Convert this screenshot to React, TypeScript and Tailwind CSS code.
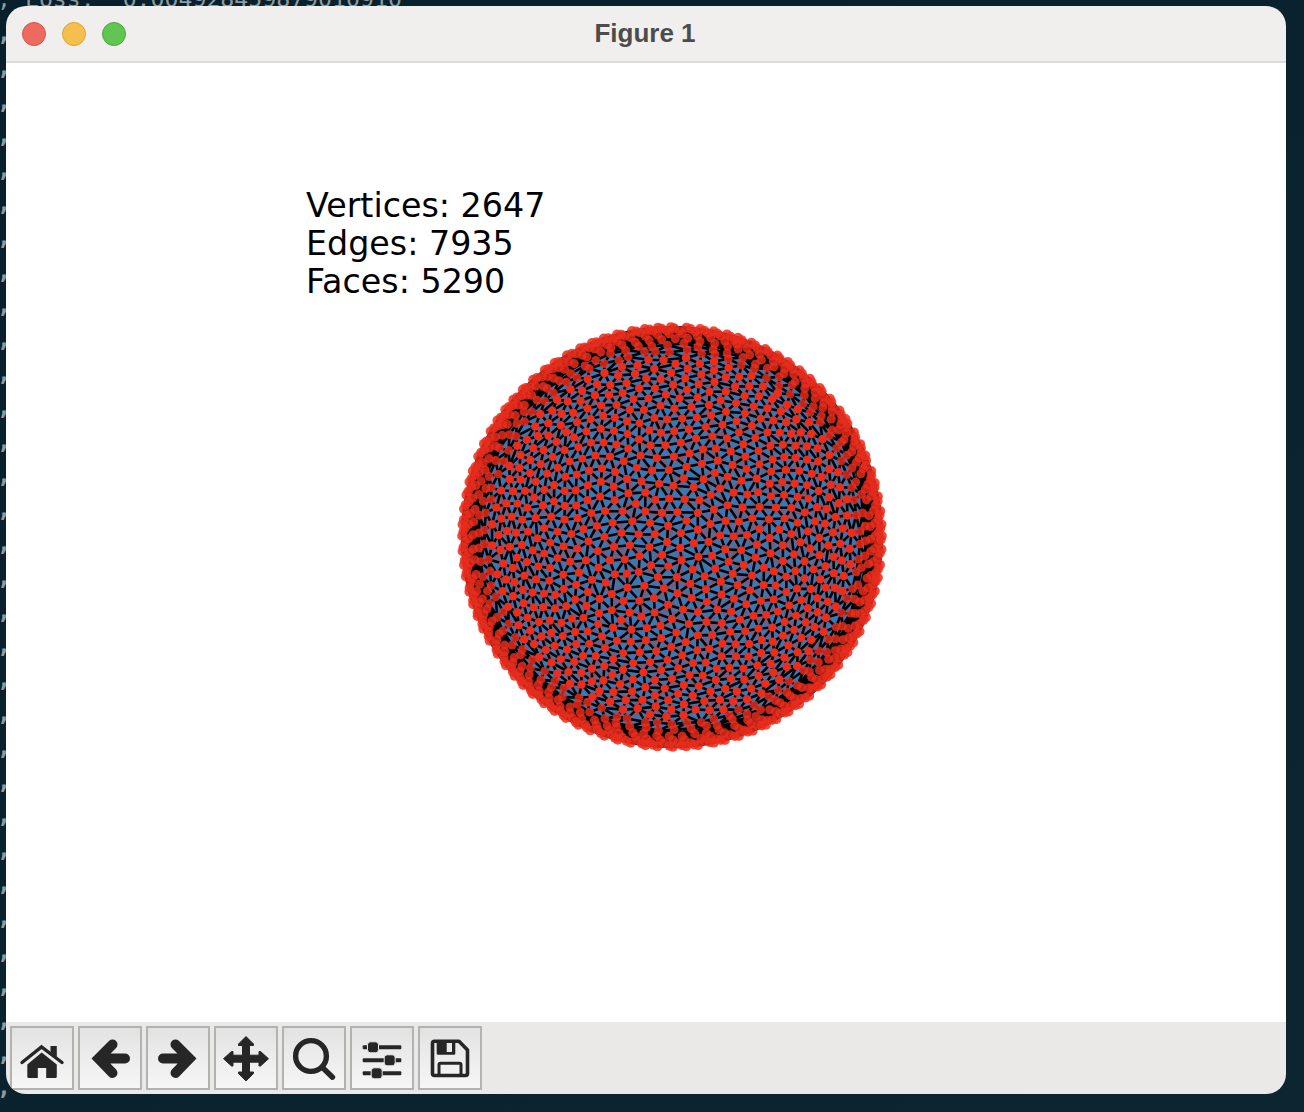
import { useMemo } from "react";

const MONO = { fontFamily: '"DejaVu Sans Mono", monospace' };

function mulberry(seed: number) {
  return () => {
    seed |= 0;
    seed = (seed + 0x6d2b79f5) | 0;
    let t = Math.imul(seed ^ (seed >>> 15), 1 | seed);
    t = (t + Math.imul(t ^ (t >>> 7), 61 | t)) ^ t;
    return ((t ^ (t >>> 14)) >>> 0) / 4294967296;
  };
}

function buildMesh() {
  const R = 210;
  const C = 220;
  const rand = mulberry(23);
  const golden = Math.PI * (3 - Math.sqrt(5));
  const pts: number[][] = [];
  const free: boolean[] = [];

  // rim of the ball: rings about the view axis, columns nearly aligned, so they read as radial chains
  const ringStep = 0.075;
  const ringCount = 7;
  const wobble = Array.from({ length: 96 }, () => (rand() - 0.5) * 0.014);
  for (let k = 0; k < ringCount; k++) {
    const phi = 0.03 + ringStep * k;
    const columns = k < 5 ? 96 : 82;
    const twist = (k * 0.3 * Math.PI * 2) / 96;
    for (let c = 0; c < columns; c++) {
      const a =
        (c / columns) * Math.PI * 2 +
        twist +
        wobble[c % 96] +
        (rand() - 0.5) * (0.003 + k * 0.003);
      const ph = phi + (rand() - 0.5) * (0.01 + k * 0.004);
      const x = Math.cos(ph) * Math.cos(a);
      const y = Math.cos(ph) * Math.sin(a);
      pts.push([x, y, Math.sin(ph)]);
      free.push(false);
      pts.push([x, y, -Math.sin(ph)]);
      free.push(false);
    }
  }
  const limit = Math.sin(0.03 + ringStep * (ringCount - 0.1));

  // caps: a sunflower lattice, shaken and then relaxed so that it is mostly hexagonal with a few defects
  const M = 2647;
  for (let i = 0; i < M; i++) {
    const z = 1 - (2 * (i + 0.5)) / M;
    if (Math.abs(z) < limit) continue;
    const r = Math.sqrt(1 - z * z);
    const a = i * golden;
    let x = r * Math.cos(a);
    let y = r * Math.sin(a);
    x += (rand() - 0.5) * 0.06;
    y += (rand() - 0.5) * 0.06;
    const l = Math.hypot(x, y, z);
    pts.push([x / l, y / l, z / l]);
    free.push(z > 0);
  }
  const N = pts.length;

  const active: number[] = [];
  for (let i = 0; i < N; i++) if (pts[i][2] > 0.28) active.push(i);
  const cut = 0.09;
  for (let it = 0; it < 10; it++) {
    const move = pts.map(() => [0, 0, 0]);
    for (let ii = 0; ii < active.length; ii++) {
      const i = active[ii];
      const p = pts[i];
      for (let jj = ii + 1; jj < active.length; jj++) {
        const j = active[jj];
        const q = pts[j];
        const dx = p[0] - q[0];
        if (dx > cut || dx < -cut) continue;
        const dy = p[1] - q[1];
        if (dy > cut || dy < -cut) continue;
        const dz = p[2] - q[2];
        const dist = Math.sqrt(dx * dx + dy * dy + dz * dz);
        if (dist >= cut || dist === 0) continue;
        const f = ((cut - dist) / dist) * 0.22;
        move[i][0] += dx * f;
        move[i][1] += dy * f;
        move[i][2] += dz * f;
        move[j][0] -= dx * f;
        move[j][1] -= dy * f;
        move[j][2] -= dz * f;
      }
    }
    for (const i of active) {
      if (!free[i]) continue;
      const p = pts[i];
      const x = p[0] + move[i][0];
      const y = p[1] + move[i][1];
      const z = p[2] + move[i][2];
      const l = Math.hypot(x, y, z);
      pts[i] = [x / l, y / l, z / l];
    }
  }

  // triangulate: a triple is a face when the local points all lie under its plane
  const seen = new Set<number>();
  let d = "";
  const addEdge = (a: number, b: number) => {
    const key = a < b ? a * N + b : b * N + a;
    if (seen.has(key)) return;
    seen.add(key);
    const p = pts[a];
    const q = pts[b];
    d += `M${(C + p[0] * R).toFixed(1)} ${(C + p[1] * R).toFixed(1)}L${(C + q[0] * R).toFixed(1)} ${(C + q[1] * R).toFixed(1)}`;
  };
  for (let i = 0; i < N; i++) {
    const p = pts[i];
    if (p[2] < 0) continue;
    const near: [number, number][] = [];
    for (let j = 0; j < N; j++) {
      if (j === i) continue;
      const q = pts[j];
      if (q[2] < -0.02) continue;
      const dx = p[0] - q[0];
      if (dx > 0.2 || dx < -0.2) continue;
      const dy = p[1] - q[1];
      if (dy > 0.2 || dy < -0.2) continue;
      const dz = p[2] - q[2];
      near.push([dx * dx + dy * dy + dz * dz, j]);
    }
    near.sort((a, b) => a[0] - b[0]);
    const cand = near.slice(0, 14).map((n) => n[1]);
    for (let a = 0; a < cand.length; a++) {
      for (let b = a + 1; b < cand.length; b++) {
        const q = pts[cand[a]];
        const r = pts[cand[b]];
        const ux = q[0] - p[0], uy = q[1] - p[1], uz = q[2] - p[2];
        const vx = r[0] - p[0], vy = r[1] - p[1], vz = r[2] - p[2];
        let nx = uy * vz - uz * vy;
        let ny = uz * vx - ux * vz;
        let nz = ux * vy - uy * vx;
        if (nx * p[0] + ny * p[1] + nz * p[2] < 0) {
          nx = -nx;
          ny = -ny;
          nz = -nz;
        }
        let ok = true;
        for (let c = 0; c < cand.length && ok; c++) {
          if (c === a || c === b) continue;
          const s = pts[cand[c]];
          if (nx * (s[0] - p[0]) + ny * (s[1] - p[1]) + nz * (s[2] - p[2]) > 1e-12) ok = false;
        }
        if (ok) {
          addEdge(i, cand[a]);
          addEdge(i, cand[b]);
        }
      }
    }
  }
  const sorted = [...pts].sort((a, b) => a[2] - b[2]);
  return {
    edges: d,
    back: sorted.filter((p) => p[2] < 0),
    front: sorted.filter((p) => p[2] >= 0),
  };
}

function Sphere() {
  const { edges, back, front } = useMemo(buildMesh, []);
  return (
    <svg width="440" height="440" viewBox="0 0 440 440" className="block">
      <circle cx="220" cy="220" r="206" fill="#3b77b3" />
      <circle cx="220" cy="220" r="200" fill="none" stroke="#000" strokeWidth="12" />
      {back.map((p, i) => (
        <circle
          key={i}
          cx={220 + p[0] * 210}
          cy={220 + p[1] * 210}
          r={4.1}
          fill="#e12a1c"
          fillOpacity={0.3}
        />
      ))}
      <path d={edges} stroke="#000" strokeWidth="2.6" fill="none" strokeLinecap="round" />
      {front.map((p, i) => (
        <circle
          key={i}
          cx={220 + p[0] * 210}
          cy={220 + p[1] * 210}
          r={4.1 + (1 - p[2]) * (1 - p[2]) * 0.9}
          fill="#ea2d1d"
          fillOpacity={p[2] > 0.5 ? 1 : 0.82}
        />
      ))}
    </svg>
  );
}

const IC = "#262626";

function ToolButton({ children }: { children: React.ReactNode }) {
  return (
    <div className="h-[64px] w-[64px] border-2 border-[#b2b2b0] bg-gradient-to-b from-[#e3e3e3] to-[#f6f6f6]">
      <svg width="64" height="64" viewBox="0 0 64 64" className="-m-[2px] block">
        {children}
      </svg>
    </div>
  );
}

const Home = () => (
  <>
    <path d="M12 36.5 L31.5 21 L52 36.5" fill="none" stroke={IC} strokeWidth="3.4" strokeLinecap="round" />
    <path d="M40.5 20 H46.8 V31 L40.5 26 Z" fill={IC} />
    <path
      fillRule="evenodd"
      d="M31.7 26.5 L46.8 38.5 V50.5 Q46.8 52 45.3 52 H36.2 V42 H27.8 V52 H18.8 Q17.3 52 17.3 50.5 V38.5 Z"
      fill={IC}
    />
  </>
);

const arrow = "M34.5 18.5 L20.5 32.5 L34.5 47 M21 32.5 H47";
const Left = () => (
  <path d={arrow} fill="none" stroke={IC} strokeWidth="10" strokeLinecap="round" strokeLinejoin="miter" />
);
const Right = () => (
  <g transform="translate(64 0) scale(-1 1)">
    <path d={arrow} fill="none" stroke={IC} strokeWidth="10" strokeLinecap="round" strokeLinejoin="miter" />
  </g>
);

const Move = () => (
  <path
    d="M32 10.5 L39.5 18 V19.5 H35.5 V29.2 H45 V25.5 H46.5 L54.5 32.7 L46.5 40 H45 V36.2 H35.5 V46 H39.5 V47.5 L32 55 L24.5 47.5 V46 H28.5 V36.2 H19 V40 H17.5 L9.5 32.7 L17.5 25.5 H19 V29.2 H28.5 V19.5 H24.5 V18 Z"
    fill={IC}
    stroke={IC}
    strokeWidth="1"
    strokeLinejoin="round"
  />
);

const Search = () => (
  <>
    <circle cx="29" cy="30" r="15.4" fill="none" stroke={IC} strokeWidth="5.4" />
    <path d="M41 42 L50.5 51.2" stroke={IC} strokeWidth="5.4" strokeLinecap="round" />
  </>
);

const Sliders = () => (
  <>
    {[
      [21.3, 23],
      [34.3, 39.7],
      [47.3, 26.7],
    ].map(([y, x], i) => (
      <g key={i}>
        <rect x="12.7" y={y - 2} width="38.6" height="4" fill={IC} rx="1" />
        <rect x={x - 5.5} y={y - 5.5} width="11" height="11" rx="3" fill={IC} stroke="#e8e8e8" strokeWidth="1" />
      </g>
    ))}
  </>
);

const Save = () => (
  <>
    <path
      d="M16.5 15.3 H41 L49.5 24 V47.5 Q49.5 49.5 47.5 49.5 H16.5 Q14.5 49.5 14.5 47.5 V17.3 Q14.5 15.3 16.5 15.3 Z"
      fill="none"
      stroke={IC}
      strokeWidth="3.6"
      strokeLinejoin="round"
    />
    <path
      fillRule="evenodd"
      d="M18.7 14 H37.3 V27.5 Q37.3 28.7 36 28.7 H20 Q18.7 28.7 18.7 27.5 Z M28.7 16.8 V26 H34 V16.8 Z"
      fill={IC}
    />
    <path d="M21 50 V38.8 Q21 37.3 22.5 37.3 H41.5 Q43 37.3 43 38.8 V50" fill="none" stroke={IC} strokeWidth="3" />
  </>
);

export default function App() {
  const rows = Array.from({ length: 34 }, (_, i) =>
    i === 0 ? ", Loss:  0.004928459879010910" : i === 33 ? ", Loss:  0.004921556916087866" : ","
  );
  return (
    <div className="relative h-[1112px] w-[1304px] overflow-hidden bg-gradient-to-br from-[#07202b] to-[#0c2530]">
      <div
        className="-ml-[3px] -mt-[18px] whitespace-pre text-[23.2px] font-bold leading-[34px] text-[#8c9ca1]"
        style={MONO}
      >
        {rows.map((r, i) => (
          <div key={i} className={i === 0 || i === 33 ? "font-normal" : ""}>
            {r}
          </div>
        ))}
      </div>

      <div className="absolute left-[6px] top-[6px] flex h-[1088px] w-[1280px] flex-col overflow-hidden rounded-[20px]">
        <div className="relative flex h-[57px] shrink-0 items-center justify-center border-b-2 border-[#dcdcdc] bg-[#f0efee] pr-[2px]">
          <div className="absolute left-[16px] top-[16px] flex gap-[16px]">
            <div className="h-[24px] w-[24px] rounded-full border border-[#d8564b] bg-[#ee6a5f]" />
            <div className="h-[24px] w-[24px] rounded-full border border-[#dca338] bg-[#f5bf4f]" />
            <div className="h-[24px] w-[24px] rounded-full border border-[#4ca93f] bg-[#61c554]" />
          </div>
          <span
            className="text-[26px] font-bold text-[#4c4c4c]"
            style={{ fontFamily: '"Liberation Sans", sans-serif' }}
          >
            Figure 1
          </span>
        </div>

        <div className="min-h-0 flex-1 bg-white pl-[300px] pt-[124px]">
          <div
            className="text-[33.3px] leading-[38px] text-black"
            style={{ fontFamily: '"DejaVu Sans", sans-serif' }}
          >
            <div>Vertices: 2647</div>
            <div>Edges: 7935</div>
            <div>Faces: 5290</div>
          </div>
          <div className="ml-[146px] mt-[16px]">
            <Sphere />
          </div>
        </div>

        <div className="flex h-[72px] shrink-0 gap-[4px] bg-[#ebe9e8] pl-[4px] pt-[4px]">
          <ToolButton><Home /></ToolButton>
          <ToolButton><Left /></ToolButton>
          <ToolButton><Right /></ToolButton>
          <ToolButton><Move /></ToolButton>
          <ToolButton><Search /></ToolButton>
          <ToolButton><Sliders /></ToolButton>
          <ToolButton><Save /></ToolButton>
        </div>
      </div>
    </div>
  );
}
